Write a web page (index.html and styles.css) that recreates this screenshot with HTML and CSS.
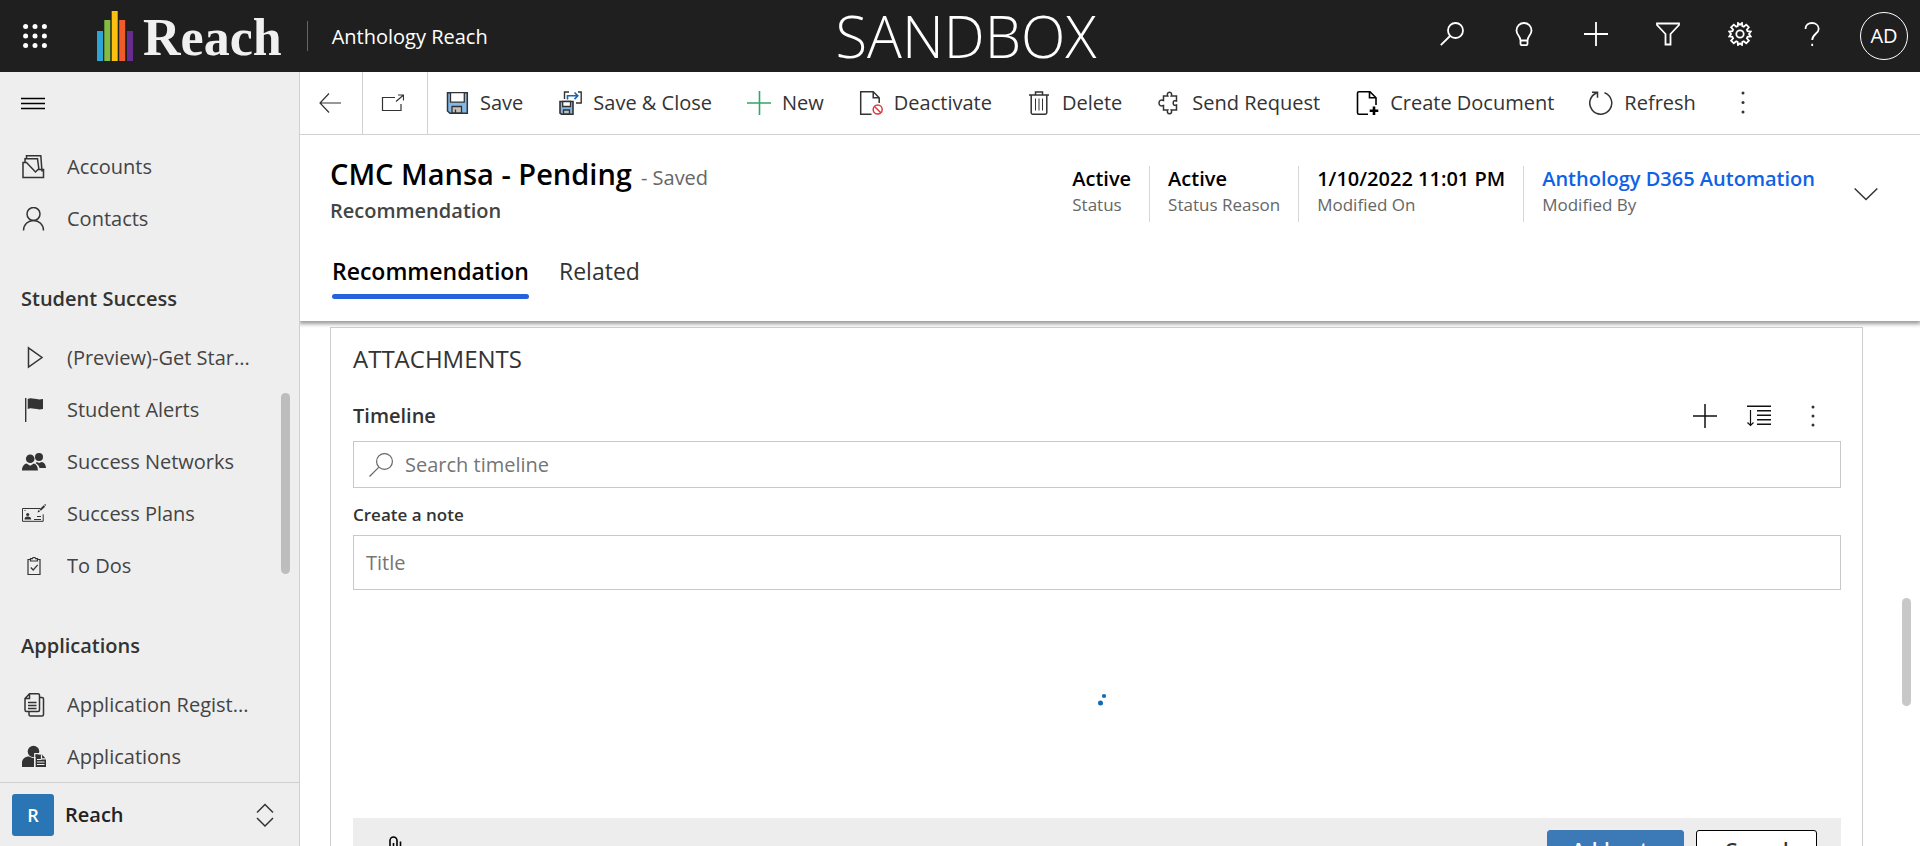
FILE: index.html
```html
<!DOCTYPE html>
<html lang="en">
<head>
<meta charset="utf-8">
<title>Recommendation: CMC Mansa - Pending</title>
<link rel="stylesheet" href="styles.css">
</head>
<body>
<header class="topbar">
  <button class="icon-btn waffle" aria-label="App launcher">
    <svg class="icon" viewBox="0 0 24 24"><circle cx="2.6" cy="2.6" r="2.5"/><circle cx="12" cy="2.6" r="2.5"/><circle cx="21.400" cy="2.6" r="2.500"/><circle cx="2.6" cy="12" r="2.5"/><circle cx="12" cy="12" r="2.5"/><circle cx="21.400" cy="12" r="2.500"/><circle cx="2.6" cy="21.400" r="2.500"/><circle cx="12" cy="21.400" r="2.500"/><circle cx="21.400" cy="21.400" r="2.500"/></svg>
  </button>
  <a class="brand" href="#">
    <svg class="bars" viewBox="0 0 36 50"><path fill="#2ea3d5" d="M0 20h6v30H0z"/><path fill="#82bd41" d="M7.300 9h6v41h-6z"/><path fill="#fdc010" d="M14.700 0h6v50h-6z"/><path fill="#f15a29" d="M22.200 9h6v41h-6z"/><path fill="#652d90" d="M30 20h6v30h-6z"/></svg>
    <span class="brand-name">Reach</span>
  </a>
  <span class="app-name">Anthology Reach</span>
  <span class="env">SANDBOX</span>
  <nav class="top-actions" aria-label="Global">
    <button class="icon-btn" aria-label="Search"><svg class="icon line thick" viewBox="0 0 24 24"><circle cx="15.500" cy="8.500" r="7.500"/><path d="M10 14 .8 23.200"/></svg></button>
    <button class="icon-btn" aria-label="Tips"><svg class="icon line thick" viewBox="0 0 24 24"><path d="M8.500 18.500C8.500 14 4.500 13 4.500 8.500a7.500 7.500 0 0 1 15 0c0 4.500-4 5.500-4 10zM8.500 18.500v3.200q0 1.500 1.500 1.500h4q1.500 0 1.500-1.500v-3.200"/></svg></button>
    <button class="icon-btn" aria-label="New"><svg class="icon line thick" viewBox="0 0 24 24"><path d="M12 0v24M0 12h24"/></svg></button>
    <button class="icon-btn" aria-label="Filter"><svg class="icon line thick" viewBox="0 0 24 24"><path d="M1 1.500h22v1.500l-8.500 9V22.500h-5V12L1 3z"/></svg></button>
    <button class="icon-btn" aria-label="Settings"><svg class="icon line thick" viewBox="0 0 24 24"><circle cx="12" cy="12" r="3.700"/><path d="M9.800 4 10 1l2 1.800L14 1l.3 3 1.500.6 2.400-2 1.300 1.300 1.300 1.300-1.900 2.400.6 1.500 3.200.4-1.700 2.500 1.700 2.500-3.200.3-.6 1.500 2 2.400-2.700 2.600-2.400-1.900-1.500.6L14 23l-2-1.600L10 23l-.4-3-1.400-.6-2.400 1.900-2.700-2.600 2-2.400-.7-1.500L1.300 14.500 3 12 1.300 9.500l3.100-.4.700-1.500-2-2.400 2.700-2.600 2.400 2z"/></svg></button>
    <button class="icon-btn" aria-label="Help"><svg class="icon line thick" viewBox="0 0 24 24"><path d="M5.500 7C5.500 3 8.500 1 12 1s6.700 2.200 6.700 6c0 4.500-6.500 5.300-6.500 11M12.200 21.700V24"/></svg></button>
    <button class="avatar" aria-label="Account">AD</button>
  </nav>
</header>

<div class="shell">
  <aside class="sidebar">
    <button class="icon-btn menu" aria-label="Collapse menu"><svg class="icon line dark" viewBox="0 0 24 24"><path d="M0 6.500h24M0 11.500h24M0 16.500h24"/></svg></button>
    <nav class="nav" aria-label="Site map">
      <a class="nav-item" href="#"><svg class="icon line heavy" viewBox="0 0 24 24"><path d="M4.500 3V.8h14.300l1.200 15.700M3 7V3.800h12.500l1.500 11M1 7.500h3.500l9 9.500L16 14.500h5.500V22.500H1z"/></svg><span>Accounts</span></a>
      <a class="nav-item" href="#"><svg class="icon line heavy" viewBox="0 0 24 24"><circle cx="11.500" cy="7" r="6.500"/><path d="M1.500 23.500c0-6 4.500-10 10-10s10 4 10 10"/></svg><span>Contacts</span></a>
      <h2 class="nav-head">Student Success</h2>
      <a class="nav-item" href="#"><svg class="icon line heavy" viewBox="0 0 24 24"><path d="M6.500 1.800 20 11.500 6.500 21z"/></svg><span>(Preview)-Get Star...</span></a>
      <a class="nav-item" href="#"><svg class="icon" viewBox="0 0 24 24"><path d="M3 0h1.400v24H3zM5.700 1c4-2 8 1.500 15.300 0v10c-7 1.500-11-2-15.300 0z"/></svg><span>Student Alerts</span></a>
      <a class="nav-item" href="#"><svg class="icon" viewBox="0 0 24 24"><circle cx="17" cy="7" r="4"/><circle cx="8.200" cy="8.700" r="4.300"/><path d="M0 20.500c0-4 2-6.500 4.500-7l3.700 2.200 3.700-2.200c2.300.5 4 3 4 7zM13.500 13l1.500-1 2 1 2.500-1c2.500.3 4.500 2.500 4.500 6h-6.500c-.5-2-1.500-3.500-4-5z"/></svg><span>Success Networks</span></a>
      <a class="nav-item" href="#"><svg class="icon" viewBox="0 0 24 24"><path fill="none" stroke="#333" d="M18 6.500H.5v12.800h20.700v-7M2.500 8.500h1M12 17.500h7M15 14.500h4"/><circle cx="5.700" cy="12.500" r="1.600"/><path d="M2.500 17.500c0-2 1-3 3.200-3s3.500 1 3.500 3zM15.500 10.500l1-2.800 1.700 1.700zM17.500 7.200l4.300-4 1.300 1.500-4.200 4zM22.200 2.500l1-.6.8 1-.7 1z"/></svg><span>Success Plans</span></a>
      <a class="nav-item" href="#"><svg class="icon line" viewBox="0 0 24 24"><path d="M8.500 5.500h-2.500v15h12v-15h-2.500M8.500 7V4.700h2L11 3.500h2l.5 1.200h2V7zM8.800 13.500l2.400 2.500 4.500-5.200"/></svg><span>To Dos</span></a>
      <h2 class="nav-head">Applications</h2>
      <a class="nav-item" href="#"><svg class="icon line heavy" viewBox="0 0 24 24"><path d="M7.500.8H16q1.500 0 1.500 1.500V17q0 1.500-1.500 1.500H4.500Q3 18.500 3 17V5.500zM7.500.8v4.700H3M18 4.500h2q1.500 0 1.500 1.500v15.500q0 1.500-1.500 1.500H8.500Q7 23 7 21.500V19M6 9.500h8.500M6 12.500h8.500M6 15.500h8.500"/></svg><span>Application Regist...</span></a>
      <a class="nav-item" href="#"><svg class="icon" viewBox="0 0 24 24"><circle cx="11.500" cy="6.500" r="5.800"/><path d="M0 22v-4c0-4 3-6.500 7-6.500l3.500 1.500H12v9zM13.500 9.500h6.500l4 4.500v8H13.500z"/><path stroke="#eee" fill="none" stroke-width="1.200" d="M12.700 22V8.700h7M15 14.500h4.500M15 17h7.500M15 19.500h7.500M19.500 9.500v4.300H24"/></svg><span>Applications</span></a>
    </nav>
    <button class="area">
      <span class="area-tile">R</span><span class="area-name">Reach</span>
      <svg class="icon line heavy" viewBox="0 0 24 24"><path d="M4 9.500 12 1.500l8 8M4 15l8 8 8-8"/></svg>
    </button>
    <span class="thumb side-thumb"></span>
  </aside>

  <main class="main">
    <div class="commands" role="toolbar" aria-label="Commands">
      <button class="cmd boxed" aria-label="Back"><svg class="icon line" viewBox="0 0 24 24"><path d="M12 2.500 3 12l9 9.500M3 12h21"/></svg></button>
      <button class="cmd boxed wide" aria-label="Open in new window"><svg class="icon line" viewBox="0 0 24 24"><path d="M15 6.500H2.500v13H21V13M16 10.500 23.500 4M18 4h5.500v5.500"/></svg></button>
      <button class="cmd"><svg class="icon" viewBox="0 0 24 24"><path fill="#83b9ea" stroke="#333" stroke-width="1.500" d="M2.500 1.700h19.800v20.600H5L2.500 20z"/><path fill="#fff" stroke="#333" stroke-width="1.300" d="M5.500 1.700h13.800v9.500H5.500z"/><path fill="#c5c0b8" stroke="#333" stroke-width="1.300" d="M7 22v-6.500h9.500V22zM10.500 22v-3.500"/></svg>Save</button>
      <button class="cmd"><svg class="icon" viewBox="0 0 24 24"><path fill="#83b9ea" stroke="#333" stroke-width="1.600" d="M2 10.500h13v12.700H3.500L2 22z"/><path fill="#fff" stroke="#333" stroke-width="1.300" d="M4.700 10.500h7.800v5H4.700z"/><path fill="#c5c0b8" stroke="#333" stroke-width="1.300" d="M5.500 23v-4h6v4z"/><path fill="none" stroke="#333" stroke-width="1.400" d="M6.500 8V1H11M20 1h3.200v11H18"/><path fill="none" stroke="#1665b0" stroke-width="1.600" d="M9.500 8.500V4.800h10M16.500 1.500l3.300 3.300-3.300 3.300"/></svg>Save &amp; Close</button>
      <button class="cmd"><svg class="icon" viewBox="0 0 24 24"><path stroke="#2fa866" stroke-width="1.600" d="M12.500 0v24M0 12h24"/></svg>New</button>
      <button class="cmd"><svg class="icon line heavy" viewBox="0 0 24 24"><path d="M12.500 23.200H1.700V.8h12.500l6 6V12M14.200.8v6h6"/><g stroke="#e0393e"><circle cx="18.700" cy="18.500" r="4.500"/><path d="M15.500 15.500l6.300 6.200"/></g></svg>Deactivate</button>
      <button class="cmd"><svg class="icon line heavy" viewBox="0 0 24 24"><path d="M2 4h20M8.500 4V1h7v3M4.200 4v17.800q0 1.400 1.400 1.400h12.800q1.400 0 1.400-1.400V4"/><path stroke-width="1" d="M8.500 7.500v12M12 7.500v12M15.500 7.500v12"/></svg>Delete</button>
      <button class="cmd"><svg class="icon line heavy" viewBox="0 0 24 24"><path d="M6.500 5h4.300c-1-2-.2-3.700 1.700-3.700S15.200 3 14.200 5h5.300v5c-3-1-3.300.5-3.300 2s.5 3 3.300 2v5h-5.300c1 2 .2 3.700-1.700 3.700S9.800 21 10.800 19H6.500v-4.500C4 15.500 2 14.500 2 12s2-3.500 4.500-2.500z"/></svg>Send Request</button>
      <button class="cmd"><svg class="icon line black" viewBox="0 0 24 24"><path d="M13 23.200H4q-1.500 0-1.500-1.500V2.300Q2.500.8 4 .8h11l6 6V14M14.500.8v6h6.500"/><path stroke-width="2.600" d="M19 15.500V24M14.700 19.800h8.600"/></svg>Create Document</button>
      <button class="cmd"><svg class="icon line heavy" viewBox="0 0 24 24"><path d="M15.500 1.800a11 11 0 1 1-8 .2M3 1.200h5.500v5.500"/></svg>Refresh</button>
      <button class="cmd" aria-label="More commands"><svg class="icon" viewBox="0 0 24 24"><circle cx="12" cy="2" r="1.500"/><circle cx="12" cy="11.500" r="1.500"/><circle cx="12" cy="21" r="1.500"/></svg></button>
    </div>

    <section class="record">
      <div class="record-top">
        <div>
          <div class="title-row"><h1 class="title">CMC Mansa - Pending</h1><span class="saved">- Saved</span></div>
          <p class="entity">Recommendation</p>
        </div>
        <dl class="facts">
          <div class="fact"><dd>Active</dd><dt>Status</dt></div>
          <div class="fact"><dd>Active</dd><dt>Status Reason</dt></div>
          <div class="fact"><dd>1/10/2022 11:01 PM</dd><dt>Modified On</dt></div>
          <div class="fact"><dd><a href="#">Anthology D365 Automation</a></dd><dt>Modified By</dt></div>
        </dl>
        <button class="icon-btn expand" aria-label="Expand header"><svg class="icon line heavy" viewBox="0 0 24 24"><path d="M.7 6.500 12 17.500l11.300-11"/></svg></button>
      </div>
      <div class="tabs" role="tablist">
        <button class="tab active" role="tab" aria-selected="true">Recommendation</button>
        <button class="tab" role="tab" aria-selected="false">Related</button>
      </div>
    </section>

    <div class="scroll">
      <section class="card">
        <h2 class="card-title">ATTACHMENTS</h2>
        <div class="timeline-head">
          <h3 class="timeline">Timeline</h3>
          <button class="icon-btn" aria-label="Create record"><svg class="icon line dark heavy" viewBox="0 0 24 24"><path d="M12 0v24M0 12h24"/></svg></button>
          <button class="icon-btn" aria-label="Sort"><svg class="icon line dark heavy" viewBox="0 0 24 24"><path d="M0 2.200h24M10 6.700h14M10 11.200h14M10 15.700h14M10 20.200h14"/><path stroke-width="1.200" d="M3.500 6v15.500M.5 18.500l3 3 3-3"/></svg></button>
          <button class="icon-btn" aria-label="More"><svg class="icon" viewBox="0 0 24 24"><circle cx="12" cy="3" r="1.500"/><circle cx="12" cy="12" r="1.500"/><circle cx="12" cy="21" r="1.500"/></svg></button>
        </div>
        <label class="field search">
          <svg class="icon line gray" viewBox="0 0 24 24"><circle cx="15.500" cy="8.500" r="7.900"/><path d="M9.700 14.300.5 23.500"/></svg>
          <input type="text" placeholder="Search timeline" aria-label="Search timeline">
        </label>
        <label class="note-label" for="note-title">Create a note</label>
        <input class="field note-title" id="note-title" type="text" placeholder="Title">
        <div class="loading" role="status" aria-label="Loading"><svg class="icon" viewBox="0 0 24 24"><circle cx="17" cy="8" r="2.100"/><circle cx="13.500" cy="15" r="2.500"/></svg></div>
        <div class="note-actions">
          <button class="icon-btn clip" aria-label="Attach file"><svg class="icon line black" viewBox="0 0 24 24"><path d="M5 20V4.500a3.500 3.500 0 0 1 7 0V17q0 2-1.800 2T8.500 17V7M15.500 5.500V18a5 5 0 0 1-10.500 2"/></svg></button>
          <button class="btn primary">Add note</button>
          <button class="btn">Cancel</button>
        </div>
      </section>
      <span class="thumb main-thumb"></span>
    </div>
  </main>
</div>
</body>
</html>
```
FILE: styles.css
```css
* { box-sizing: border-box; }
body {
  margin: 0;
  height: 100vh;
  display: flex;
  flex-direction: column;
  overflow: hidden;
  font: 20px/26px "Open Sans", "Noto Sans", sans-serif;
  color: #333;
  background: #fff;
}
h1, h2, h3, p, dl, dd { margin: 0; font-weight: 400; }
button, input { font: inherit; color: inherit; }
button { border: 0; background: none; padding: 0; cursor: pointer; }
a { color: inherit; text-decoration: none; }

.icon { width: 24px; height: 24px; flex: none; display: block; fill: #333; }
.waffle .icon { fill: #fff; }
.loading .icon { fill: #0f6cb4; }
.line { fill: none; stroke: #333; stroke-width: 1.2; }
.heavy { stroke-width: 1.5; }
.thick { stroke: #fff; stroke-width: 1.8; }
.dark { stroke: #111; }
.menu .icon { stroke: #000; stroke-width: 1.4; }
.black { stroke: #000; stroke-width: 1.6; }
.gray { stroke: #666; }
.icon-btn { flex: none; }

.topbar {
  flex: none;
  height: 72px;
  display: flex;
  align-items: center;
  position: relative;
  background: #1f1f1f;
  color: #fff;
}
.waffle { margin-left: 23px; }
.brand { display: flex; align-items: center; gap: 10px; margin-left: 50px; }
.bars { width: 36px; height: 50px; display: block; }
.brand-name { font: 700 52px/60px "Liberation Serif", serif; color: #f0f0f0; padding-top: 4px; }
.app-name {
  margin-left: 25px;
  padding: 2px 0 0 24px;
  border-left: 1px solid #666;
  line-height: 28px;
}
.env {
  position: absolute;
  left: 0;
  right: 0;
  text-align: center;
  font-weight: 300;
  font-size: 58px;
  line-height: 72px;
  padding-left: 12px;
  pointer-events: none;
}
.top-actions { margin-left: auto; display: flex; align-items: center; gap: 48px; padding-right: 12px; }
.top-actions .icon-btn { padding-bottom: 4px; }
.avatar {
  width: 48px;
  height: 48px;
  margin-left: -12px;
  border: 1px solid #fff;
  border-radius: 50%;
}

.shell { flex: 1; min-height: 0; display: flex; }
.sidebar {
  flex: none;
  width: 300px;
  display: flex;
  flex-direction: column;
  position: relative;
  background: #eee;
  border-right: 1px solid #d0d0d0;
}
.menu { align-self: flex-start; margin: 20px 0 25px 21px; }
.nav { flex: 1; min-height: 0; overflow: hidden; }
.nav-item {
  height: 52px;
  display: flex;
  align-items: center;
  gap: 21px;
  padding: 0 46px 0 22px;
  color: #444;
}
.nav-item span { overflow: hidden; text-overflow: ellipsis; white-space: nowrap; }
.nav-head { padding: 41px 21px 20px; font-size: 20px; font-weight: 600; }
.area {
  flex: none;
  height: 64px;
  display: flex;
  align-items: center;
  gap: 11px;
  padding: 0 22px 0 12px;
  border-top: 1px solid #d0d0d0;
  color: #222;
}
.area-tile {
  width: 42px;
  line-height: 42px;
  border-radius: 3px;
  background: #2a76b5;
  color: #fff;
  font-size: 18px;
  font-weight: 600;
}
.area-name { font-weight: 600; }
.area .icon { margin-left: auto; }
.thumb { position: absolute; width: 9px; border-radius: 5px; background: #c8c8c8; }
.side-thumb { right: 9px; top: 321px; height: 181px; background: #bdbdbd; }

.main { flex: 1; min-width: 0; display: flex; flex-direction: column; }
.commands { flex: none; display: flex; height: 63px; border-bottom: 1px solid #d2d2d2; }
.cmd { display: flex; align-items: center; gap: 11px; padding: 0 18px 0 17px; white-space: nowrap; }
.boxed { width: 63px; border-right: 1px solid #d2d2d2; }
.wide { width: 65px; }

.record {
  flex: none;
  padding: 22px 42px 22px 30px;
  position: relative;
  box-shadow: 0 2px 4px 1px rgba(0, 0, 0, .4);
  clip-path: inset(0 0 -8px 0);
}
.record-top { display: flex; align-items: flex-start; }
.title-row { display: flex; align-items: baseline; gap: 9px; }
.title { font-size: 29px; line-height: 34px; font-weight: 600; color: #000; }
.saved { color: #666; }
.entity { font-weight: 600; color: #444; line-height: 40px; }
.facts { margin-left: auto; display: flex; padding-top: 9px; }
.fact { padding: 0 18px; height: 56px; border-left: 1px solid #d8d8d8; white-space: nowrap; }
.fact:first-child { border: 0; }
.fact dd { font-weight: 600; color: #000; line-height: 26px; }
.fact dd a { color: #0f62e6; }
.fact dt { font-size: 17px; color: #666; }
.expand { margin: 25px 0 0 21px; }
.tabs { display: flex; gap: 30px; padding: 19px 0 0 2px; }
.tab { font-size: 23px; line-height: 32px; padding: 5px 0 7px; border-bottom: 5px solid transparent; }
.active { position: relative; font-weight: 600; color: #000; }
.active::after {
  content: "";
  position: absolute;
  left: 0;
  right: 0;
  bottom: -5px;
  height: 5px;
  border-radius: 3px;
  background: #2563dc;
}

.scroll { flex: 1; min-height: 0; overflow: hidden; position: relative; padding: 6px 57px 0 30px; }
.card { border: 1px solid #ccc; padding: 13px 21px 24px 22px; }
.card-title { font-size: 24px; line-height: 36px; }
.timeline-head { display: flex; align-items: center; gap: 30px; padding: 26px 16px 12px 0; }
.timeline { flex: 1; font-size: 20px; font-weight: 600; }
.field { display: flex; align-items: center; width: 100%; border: 1px solid #c8c8c8; background: #fff; }
.search { height: 47px; gap: 12px; padding: 0 15px; }
.search input { flex: 1; min-width: 0; border: 0; outline: 0; background: none; padding: 0; }
::placeholder { color: #757575; opacity: 1; }
.note-label { display: block; padding: 14px 0 7px; font-size: 17px; font-weight: 600; }
.note-title { height: 55px; padding: 0 12px; }
.loading { height: 228px; display: flex; justify-content: center; align-items: center; padding: 0 0 8px 3px; }
.note-actions { display: flex; align-items: flex-start; gap: 12px; padding: 12px 24px; background: #ededed; }
.clip { margin: 6px auto 0 8px; }
.btn {
  width: 121px;
  height: 39px;
  border: 1px solid #000;
  border-radius: 3px;
  background: #fff;
  font-weight: 600;
}
.primary { width: 137px; border-color: #3b79b7; background: #3b79b7; color: #fff; }
.main-thumb { right: 9px; top: 277px; height: 108px; }
```
